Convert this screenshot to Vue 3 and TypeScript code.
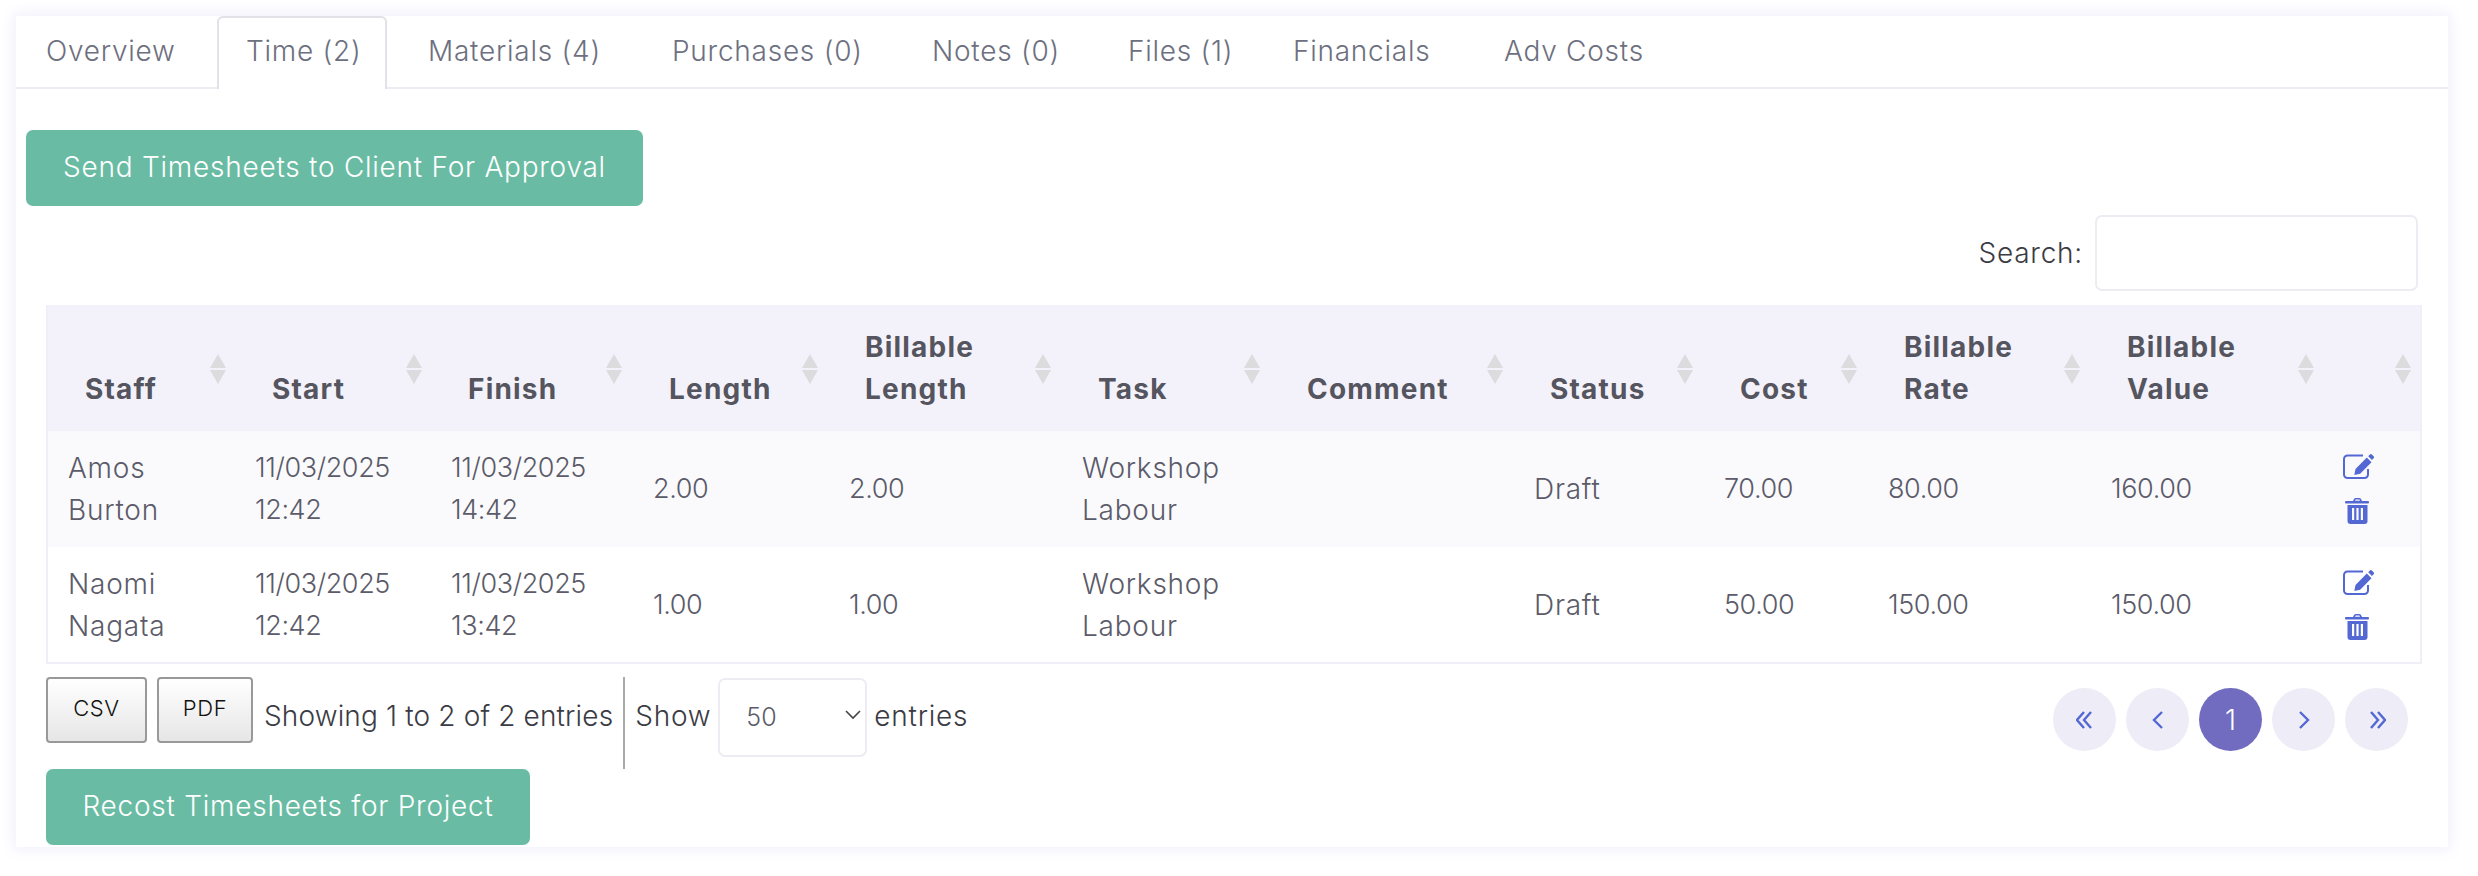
<script setup lang="ts">
interface Column {
  label: string[];
  width: number;
}

interface Row {
  staff: string[];
  start: string;
  finish: string;
  length: string;
  billable: string;
  cost: string;
  rate: string;
  value: string;
}

const tabs = ["Overview", "Time (2)", "Materials (4)", "Purchases (0)", "Notes (0)", "Files (1)", "Financials", "Adv Costs"];

const columns: Column[] = [
  { label: ["Staff"], width: 188 },
  { label: ["Start"], width: 196 },
  { label: ["Finish"], width: 200 },
  { label: ["Length"], width: 196 },
  { label: ["Billable", "Length"], width: 233 },
  { label: ["Task"], width: 209 },
  { label: ["Comment"], width: 243 },
  { label: ["Status"], width: 190 },
  { label: ["Cost"], width: 164 },
  { label: ["Billable", "Rate"], width: 223 },
  { label: ["Billable", "Value"], width: 234 },
  { label: [], width: 98 }
];

const rows: Row[] = [
  { staff: ["Amos", "Burton"], start: "12:42", finish: "14:42", length: "2.00", billable: "2.00", cost: "70.00", rate: "80.00", value: "160.00" },
  { staff: ["Naomi", "Nagata"], start: "12:42", finish: "13:42", length: "1.00", billable: "1.00", cost: "50.00", rate: "150.00", value: "150.00" }
];
</script>

<template>
  <div class="page">
    <div class="card">
      <ul class="tabs">
        <li v-for="(tab, idx) in tabs" :key="tab" class="tab" :class="{ active: idx === 1 }">{{ tab }}</li>
      </ul>

      <div class="body">
        <button class="btn-green send">Send Timesheets to Client For Approval</button>

        <div class="search-row">
          <label class="search-label" for="search">Search:</label>
          <input id="search" class="search-input" type="text" />
        </div>

        <table class="grid">
          <colgroup>
            <col v-for="(col, idx) in columns" :key="idx" :style="{ width: col.width + 'px' }" />
          </colgroup>
          <thead>
            <tr>
              <th v-for="(col, idx) in columns" :key="idx">
                <span v-for="line in col.label" :key="line" class="th-line">{{ line }}</span>
                <svg class="sort" viewBox="0 0 16 30" width="16" height="30">
                  <path d="M8 0 16 14H0Z" />
                  <path d="M0 16H16L8 30Z" />
                </svg>
              </th>
            </tr>
          </thead>
          <tbody>
            <tr v-for="row in rows" :key="row.staff[0]">
              <td>{{ row.staff[0] }}<br />{{ row.staff[1] }}</td>
              <td class="num">11/03/2025<br />{{ row.start }}</td>
              <td class="num">11/03/2025<br />{{ row.finish }}</td>
              <td class="num">{{ row.length }}</td>
              <td class="num">{{ row.billable }}</td>
              <td>Workshop<br />Labour</td>
              <td></td>
              <td>Draft</td>
              <td class="num">{{ row.cost }}</td>
              <td class="num">{{ row.rate }}</td>
              <td class="num">{{ row.value }}</td>
              <td class="actions">
                <svg class="icon-edit" viewBox="0 0 31 25" width="31" height="25">
                  <path class="edit-box" d="M25 15v5.500a3.500 3.500 0 0 1-3.500 3.500H4.500a3.500 3.500 0 0 1-3.500-3.500V5a3.500 3.500 0 0 1 3.500-3.500H20" />
                  <path class="edit-pen" d="M23.800 3.600l4.700 4.600-11.300 11.500-5.900 1.200 1.200-5.900ZM25.200 2.200 26.900.500a1.400 1.400 0 0 1 2 0l1.700 1.700a1.400 1.400 0 0 1 0 2l-1.700 1.700Z" />
                </svg>
                <svg class="icon-trash" viewBox="0 0 25 27" width="25" height="27">
                  <path d="M8 4 9 2a2 2 0 0 1 1.800-1h3.400a2 2 0 0 1 1.800 1l1 2h6a1 1 0 0 1 1 1v.500a1 1 0 0 1-1 1H1a1 1 0 0 1-1-1V5a1 1 0 0 1 1-1ZM10 3.800h5l-.6-1.200h-3.800Z" fill-rule="evenodd" />
                  <path d="M2.500 8h20v16a3 3 0 0 1-3 3h-14a3 3 0 0 1-3-3ZM7 11v12h2.200V11Zm4.400 0v12h2.200V11Zm4.400 0v12H18V11Z" fill-rule="evenodd" />
                </svg>
              </td>
            </tr>
          </tbody>
        </table>

        <div class="footer">
          <div class="footer-left">
            <div class="tools">
              <button class="btn-file">CSV</button>
              <button class="btn-file">PDF</button>
              <span class="info">Showing 1 to 2 of 2 entries</span>
              <div class="length">
                <span>Show</span>
                <div class="select-wrap">
                  <select class="length-select">
                    <option>50</option>
                  </select>
                  <svg class="select-arrow" viewBox="0 0 16 10" width="16" height="10"><path d="M1 1l7 7 7-7" /></svg>
                </div>
                <span>entries</span>
              </div>
            </div>
            <button class="btn-green recost">Recost Timesheets for Project</button>
          </div>

          <div class="pager">
            <span class="page-dot">
              <svg viewBox="0 0 18 18" width="18" height="18"><path d="M8 1 1 9l7 8M15 1 8 9l7 8" /></svg>
            </span>
            <span class="page-dot">
              <svg viewBox="0 0 18 18" width="18" height="18"><path d="M13 1 5 9l8 8" /></svg>
            </span>
            <span class="page-dot current">1</span>
            <span class="page-dot">
              <svg viewBox="0 0 18 18" width="18" height="18"><path d="M5 1l8 8-8 8" /></svg>
            </span>
            <span class="page-dot">
              <svg viewBox="0 0 18 18" width="18" height="18"><path d="M3 1l7 8-7 8M10 1l7 8-7 8" /></svg>
            </span>
          </div>
        </div>
      </div>
    </div>
  </div>
</template>

<style scoped>
.page {
  padding: 16px 30px 29px 16px;
  font-family: Inter, "Open Sans", sans-serif;
  font-size: 28px;
  line-height: 42px;
  letter-spacing: 0.75px;
  color: #5b5b69;
}

.card {
  background: #ffffff;
  box-shadow: 0 0 14px 3px #f1f0fb;
  height: 831px;
}

.tabs {
  display: grid;
  grid-template-columns: 201px 181px 244px 260px 196px 165px 211px 300px 1fr;
  height: 73px;
  margin: 0;
  padding: 0;
  list-style: none;
  border-bottom: 2px solid #edecf3;
  box-sizing: border-box;
}

.tab {
  padding: 14px 0 0 30px;
  color: #6d7080;
  font-weight: 300;
  box-sizing: border-box;
}

.tab.active {
  width: 170px;
  height: 73px;
  background: #ffffff;
  border: 2px solid #e2e1e8;
  border-bottom: 0;
  border-radius: 6px 6px 0 0;
  padding-left: 27px;
  padding-top: 12px;
}

.body {
  padding: 41px 27px 0 10px;
}

.btn-green {
  display: block;
  border: 0;
  border-radius: 7px;
  background: #69bca3;
  color: #ffffff;
  font: 300 28px/42px Inter, "Open Sans", sans-serif;
  letter-spacing: 0.75px;
  padding: 0 0 3px;
  height: 76px;
}

.send {
  width: 617px;
}

.search-row {
  display: flex;
  justify-content: flex-end;
  align-items: center;
  gap: 12px;
  margin: 9px 3px 14px 0;
  color: #3b3b44;
  font-weight: 300;
}

.search-input {
  width: 323px;
  height: 76px;
  border: 2px solid #edecf3;
  border-radius: 7px;
  background: #ffffff;
  box-sizing: border-box;
}

.grid {
  width: 2375px;
  margin-left: 20px;
  border-collapse: collapse;
  table-layout: fixed;
  border: 2px solid #f0eff8;
  border-top: 0;
}

.grid th {
  position: relative;
  height: 126px;
  padding: 21px 0 21px 38px;
  background: #f3f2fb;
  color: #55555f;
  font-weight: 700;
  letter-spacing: 1.2px;
  text-align: left;
  vertical-align: bottom;
  box-sizing: border-box;
}

.grid th:nth-child(-n + 3) {
  padding-left: 37px;
}

.th-line {
  display: block;
}

.sort {
  position: absolute;
  top: 49px;
  right: 9px;
  fill: #dcdbdd;
}

.grid td {
  height: 116px;
  padding: 0 0 0 22px;
  font-weight: 300;
  vertical-align: middle;
  box-sizing: border-box;
}

.grid td:nth-child(-n + 3) {
  padding-left: 20px;
}

.grid td.num {
  font-size: 27px;
  letter-spacing: -0.4px;
}

.grid tbody tr:nth-child(odd) td {
  background: #fafafd;
}

.actions {
  line-height: 0;
}

.actions svg {
  display: block;
}

.icon-edit {
  margin: 0 0 18px -2px;
}

.edit-box {
  fill: none;
  stroke: #5468d4;
  stroke-width: 2;
}

.edit-pen,
.icon-trash {
  fill: #5468d4;
}

.icon-trash {
  margin-left: 0;
}

.footer {
  display: flex;
  justify-content: space-between;
  margin-left: 20px;
  width: 2375px;
}

.tools {
  display: flex;
  align-items: flex-start;
  height: 92px;
  margin-top: 13px;
  color: #3b3b44;
}

.btn-file {
  height: 66px;
  width: 101px;
  margin-right: 10px;
  border: 2px solid #999999;
  border-radius: 4px;
  background: linear-gradient(#ffffff, #e6e6e6);
  color: #111111;
  font: 300 22px/30px Inter, "Open Sans", sans-serif;
  letter-spacing: 0.6px;
  padding: 0 0 5px;
}

.btn-file + .btn-file {
  width: 96px;
  margin-right: 11px;
}

.info {
  line-height: 79px;
  padding-right: 10px;
  font-weight: 300;
  letter-spacing: 0.15px;
}

.length {
  display: flex;
  align-items: flex-start;
  gap: 7px;
  height: 92px;
  padding-left: 10px;
  border-left: 2px solid #aaaaaa;
  line-height: 79px;
  font-weight: 300;
}

.select-wrap {
  position: relative;
  height: 79px;
}

.length-select {
  appearance: none;
  width: 149px;
  height: 79px;
  padding-left: 26px;
  border: 2px solid #edecf3;
  border-radius: 7px;
  background: #ffffff;
  color: #5b5b69;
  font: 300 25px Inter, "Open Sans", sans-serif;
}

.select-arrow {
  position: absolute;
  top: 33px;
  right: 6px;
  fill: none;
  stroke: #444444;
  stroke-width: 1.6;
}

.recost {
  width: 484px;
}

.pager {
  display: flex;
  gap: 10px;
  margin: 24px 13px 0 0;
}

.page-dot {
  display: flex;
  align-items: center;
  justify-content: center;
  width: 63px;
  height: 63px;
  border-radius: 50%;
  background: #eeedf7;
}

.page-dot svg {
  fill: none;
  stroke: #5468d4;
  stroke-width: 2.4;
}

.page-dot.current {
  background: #716cc0;
  color: #ffffff;
  font-weight: 300;
  letter-spacing: 0;
}
</style>

<style>
html,
body {
  background: #ffffff;
}
</style>
